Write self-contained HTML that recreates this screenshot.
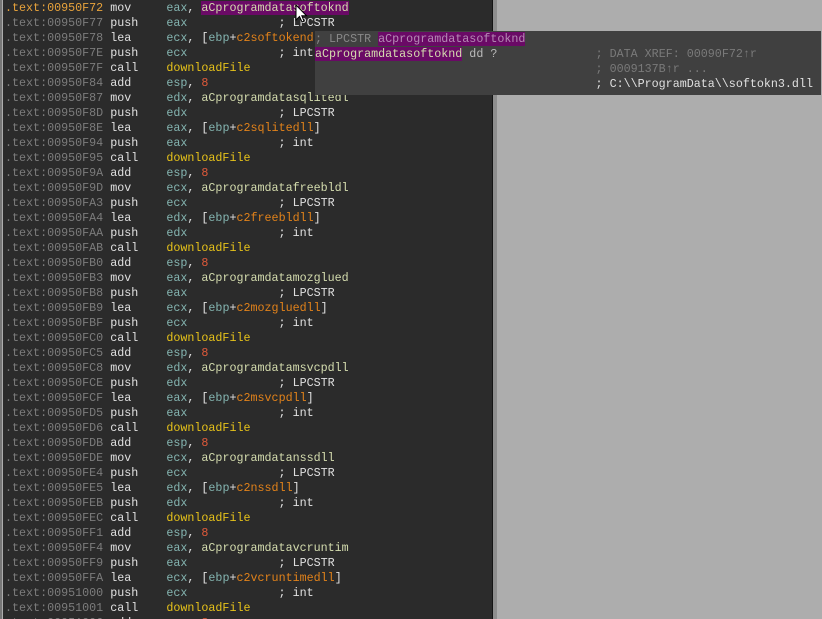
<!DOCTYPE html>
<html style="overflow:hidden;height:619px"><head><style>
body{margin:0;width:822px;height:619px;overflow:hidden;background:#adadad;position:relative;font-family:"Liberation Mono",monospace;}
#p{position:absolute;left:3px;top:0;width:489px;height:619px;background:#2b2b2b;border-right:1px solid #151515;}
#l{position:absolute;left:0;top:0;width:2px;height:619px;background:#777;}
#sh{position:absolute;left:493px;top:0;width:4px;height:619px;background:#8e8e8e;}
#wrap{position:absolute;left:0;top:0;width:822px;height:619px;overflow:hidden;}
pre{margin:0;position:absolute;left:5px;top:1px;font-size:11.7px;line-height:15px;color:#e0e0e0;font-family:"Liberation Mono",monospace;}
.a{color:#7c7c7c}.o{color:#e8a33c}.r{color:#84b4b0}.n{color:#d4dcae}.c{color:#e2821a}.k{color:#e25a3a}.f{color:#e6c21a}.h{background:#6a0a66}
#tt{position:absolute;left:315px;top:31px;width:506px;height:64px;background:#404040;}
#tt pre{left:0;top:1px;}
.g{color:#888}.g2{color:#bbb}.g3{color:#7a7a7a}
</style></head><body><div id="wrap">
<div id="l"></div><div id="p"></div><div id="sh"></div>
<pre><span class="o">.text:00950F72</span> mov     <span class="r">eax</span>, <span class="n h">aCprogramdatasoftoknd</span>
<span class="a">.text:00950F77</span> push    <span class="r">eax</span>             ; LPCSTR
<span class="a">.text:00950F78</span> lea     <span class="r">ecx</span>, [<span class="r">ebp</span>+<span class="c">c2softokend</span>]
<span class="a">.text:00950F7E</span> push    <span class="r">ecx</span>             ; int
<span class="a">.text:00950F7F</span> call    <span class="f">downloadFile</span>
<span class="a">.text:00950F84</span> add     <span class="r">esp</span>, <span class="k">8</span>
<span class="a">.text:00950F87</span> mov     <span class="r">edx</span>, <span class="n">aCprogramdatasqlitedl</span>
<span class="a">.text:00950F8D</span> push    <span class="r">edx</span>             ; LPCSTR
<span class="a">.text:00950F8E</span> lea     <span class="r">eax</span>, [<span class="r">ebp</span>+<span class="c">c2sqlitedll</span>]
<span class="a">.text:00950F94</span> push    <span class="r">eax</span>             ; int
<span class="a">.text:00950F95</span> call    <span class="f">downloadFile</span>
<span class="a">.text:00950F9A</span> add     <span class="r">esp</span>, <span class="k">8</span>
<span class="a">.text:00950F9D</span> mov     <span class="r">ecx</span>, <span class="n">aCprogramdatafreebldl</span>
<span class="a">.text:00950FA3</span> push    <span class="r">ecx</span>             ; LPCSTR
<span class="a">.text:00950FA4</span> lea     <span class="r">edx</span>, [<span class="r">ebp</span>+<span class="c">c2freebldll</span>]
<span class="a">.text:00950FAA</span> push    <span class="r">edx</span>             ; int
<span class="a">.text:00950FAB</span> call    <span class="f">downloadFile</span>
<span class="a">.text:00950FB0</span> add     <span class="r">esp</span>, <span class="k">8</span>
<span class="a">.text:00950FB3</span> mov     <span class="r">eax</span>, <span class="n">aCprogramdatamozglued</span>
<span class="a">.text:00950FB8</span> push    <span class="r">eax</span>             ; LPCSTR
<span class="a">.text:00950FB9</span> lea     <span class="r">ecx</span>, [<span class="r">ebp</span>+<span class="c">c2mozgluedll</span>]
<span class="a">.text:00950FBF</span> push    <span class="r">ecx</span>             ; int
<span class="a">.text:00950FC0</span> call    <span class="f">downloadFile</span>
<span class="a">.text:00950FC5</span> add     <span class="r">esp</span>, <span class="k">8</span>
<span class="a">.text:00950FC8</span> mov     <span class="r">edx</span>, <span class="n">aCprogramdatamsvcpdll</span>
<span class="a">.text:00950FCE</span> push    <span class="r">edx</span>             ; LPCSTR
<span class="a">.text:00950FCF</span> lea     <span class="r">eax</span>, [<span class="r">ebp</span>+<span class="c">c2msvcpdll</span>]
<span class="a">.text:00950FD5</span> push    <span class="r">eax</span>             ; int
<span class="a">.text:00950FD6</span> call    <span class="f">downloadFile</span>
<span class="a">.text:00950FDB</span> add     <span class="r">esp</span>, <span class="k">8</span>
<span class="a">.text:00950FDE</span> mov     <span class="r">ecx</span>, <span class="n">aCprogramdatanssdll</span>
<span class="a">.text:00950FE4</span> push    <span class="r">ecx</span>             ; LPCSTR
<span class="a">.text:00950FE5</span> lea     <span class="r">edx</span>, [<span class="r">ebp</span>+<span class="c">c2nssdll</span>]
<span class="a">.text:00950FEB</span> push    <span class="r">edx</span>             ; int
<span class="a">.text:00950FEC</span> call    <span class="f">downloadFile</span>
<span class="a">.text:00950FF1</span> add     <span class="r">esp</span>, <span class="k">8</span>
<span class="a">.text:00950FF4</span> mov     <span class="r">eax</span>, <span class="n">aCprogramdatavcruntim</span>
<span class="a">.text:00950FF9</span> push    <span class="r">eax</span>             ; LPCSTR
<span class="a">.text:00950FFA</span> lea     <span class="r">ecx</span>, [<span class="r">ebp</span>+<span class="c">c2vcruntimedll</span>]
<span class="a">.text:00951000</span> push    <span class="r">ecx</span>             ; int
<span class="a">.text:00951001</span> call    <span class="f">downloadFile</span>
<span class="a">.text:00951006</span> add     <span class="r">esp</span>, <span class="k">8</span></pre>
<div id="tt"><pre><span class="g">; LPCSTR </span><span class="h" style="color:#b58ab5">aCprogramdatasoftoknd</span>
<span class="h n">aCprogramdatasoftoknd</span><span class="g2"> dd ?</span>              <span class="g3">; DATA XREF: 00090F72↑r</span>
                                        <span class="g3">; 0009137B↑r ...</span>
                                        ; C:\\ProgramData\\softokn3.dll</pre></div>
<svg style="position:absolute;left:295px;top:4px" width="14" height="20" viewBox="0 0 14 20"><path d="M1 1 L1 16 L4.5 12.5 L7 18 L9 17 L6.8 11.8 L11.5 11.8 Z" fill="#fff" stroke="#000" stroke-width="1"/></svg>
</div></body></html>
